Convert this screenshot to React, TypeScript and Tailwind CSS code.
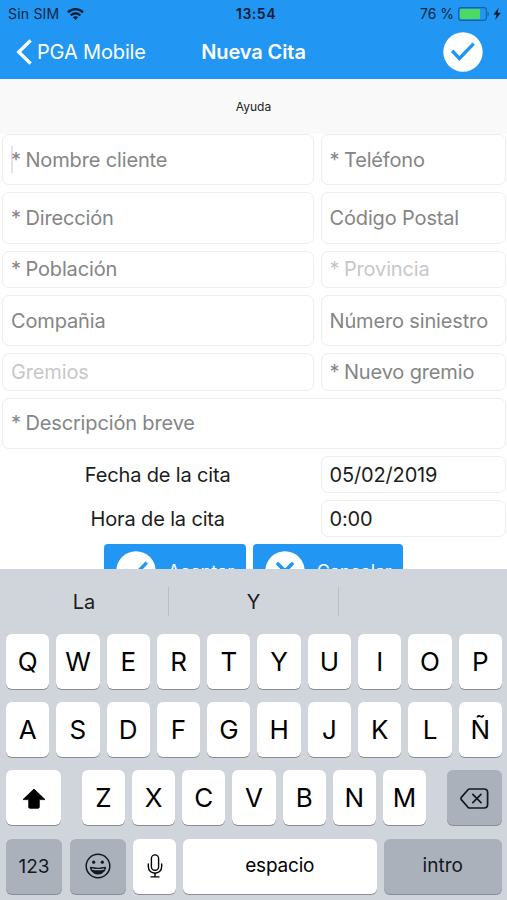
import type { ReactNode } from "react";
import clsx from "clsx";

type FieldProps = {
  children: ReactNode;
  className?: string;
  tone?: "placeholder" | "disabled" | "value";
  required?: boolean;
  focused?: boolean;
};

const tones = {
  placeholder: "text-[#858585]",
  disabled: "text-[#c7c7c9]",
  value: "text-[#1c1c1c]",
};

function Field({ children, className, tone = "placeholder", required, focused }: FieldProps) {
  return (
    <div
      className={clsx(
        "relative flex items-center whitespace-pre rounded-[7px] border border-[#ededed] bg-white pl-2",
        tones[tone],
        className,
      )}
    >
      {focused && <span className="absolute left-2 top-[11px] h-[27px] w-[2px] bg-[#e2e2fb]" />}
      <span className="relative">
        {required && <span className="tracking-[-0.6px]">* </span>}
        {children}
      </span>
    </div>
  );
}

function CheckBadge({ className }: { className?: string }) {
  return (
    <svg viewBox="0 0 40 40" className={className}>
      <circle cx="20" cy="20" r="19.7" fill="#fff" />
      <path d="M10.3 20 L16.4 26.5 L29.5 12.8" fill="none" stroke="#2196f3" strokeWidth="3.4" strokeLinecap="square" />
    </svg>
  );
}

function CrossBadge({ className }: { className?: string }) {
  return (
    <svg viewBox="0 0 40 40" className={className}>
      <circle cx="20" cy="20" r="19.7" fill="#fff" />
      <path d="M13 13 L27 27 M27 13 L13 27" fill="none" stroke="#2196f3" strokeWidth="3.6" strokeLinecap="round" />
    </svg>
  );
}

function StatusBar() {
  return (
    <div className="grid h-[27px] grid-cols-3 items-center px-2 text-[14px] text-[#0c2740]">
      <div className="flex items-center gap-2">
        <span className="tracking-[0.2px]">Sin SIM</span>
        <svg viewBox="0 0 17 12" className="h-3 w-[17px]" fill="none" stroke="#071c30" strokeWidth="2.3">
          <path d="M0.9 4.4 C5.2 0.1 11.8 0.1 16.1 4.4" />
          <path d="M3.7 7.3 C6.4 4.7 10.6 4.7 13.3 7.3" />
          <path d="M8.5 12 L5.9 9.2 C7.4 7.8 9.6 7.8 11.1 9.2 Z" fill="#071c30" stroke="none" />
        </svg>
      </div>
      <span className="pl-[5px] text-center font-semibold tracking-[0.5px] text-[#071c30]">13:54</span>
      <div className="-mr-[2px] flex items-center justify-end">
        <span className="mr-1 whitespace-nowrap">76 %</span>
        <svg viewBox="0 0 32 14" className="h-[14px] w-8">
          <rect x="0.6" y="0.6" width="27.8" height="12.8" rx="2.8" fill="none" stroke="#17639f" strokeWidth="1.1" />
          <rect x="2" y="2" width="20" height="10" rx="1" fill="#4cd964" />
          <path d="M29.6 4.7 C31.4 5.4 31.4 8.6 29.6 9.3 Z" fill="#17639f" />
        </svg>
        <svg viewBox="0 0 8 12" className="ml-[3px] h-3 w-2" fill="#071c30">
          <path d="M5.6 0 L0.3 6.8 H3.5 L2.2 12 L7.8 4.8 H4.6 Z" />
        </svg>
      </div>
    </div>
  );
}

function NavBar() {
  return (
    <div className="grid h-[50px] grid-cols-3 items-center text-white">
      <div className="flex items-center pl-4">
        <svg viewBox="0 0 16 26" className="h-[26px] w-4" fill="none" stroke="#fff" strokeWidth="3.4">
          <path d="M14.6 1.4 L2.8 13 L14.6 24.6" />
        </svg>
        <span className="ml-[5px] whitespace-nowrap text-[20px] tracking-[-0.15px]">PGA Mobile</span>
      </div>
      <h1 className="text-center text-[20px] font-semibold tracking-[-0.1px]">Nueva Cita</h1>
      <div className="flex justify-end pr-6">
        <CheckBadge className="h-10 w-10" />
      </div>
    </div>
  );
}

function AppointmentForm() {
  return (
    <div className="h-[435px] overflow-hidden">
      <div className="grid grid-cols-[311.5px_185px] grid-rows-[51.4px_51.4px_37.2px_51.4px_37.2px_51.4px_37.2px_37.2px_54px] gap-[7px] pl-[2px] text-[20px] tracking-[-0.15px]">
        <Field required focused>Nombre cliente</Field>
        <Field required>Teléfono</Field>
        <Field required>Dirección</Field>
        <Field>Código Postal</Field>
        <Field required>Población</Field>
        <Field required tone="disabled">Provincia</Field>
        <Field>Compañia</Field>
        <Field>Número siniestro</Field>
        <Field tone="disabled">Gremios</Field>
        <Field required>Nuevo gremio</Field>
        <Field required className="col-span-2">Descripción breve</Field>
        <div className="flex items-center justify-center text-[#1c1c1c]">Fecha de la cita</div>
        <Field tone="value">05/02/2019</Field>
        <div className="flex items-center justify-center text-[#1c1c1c]">Hora de la cita</div>
        <Field tone="value">0:00</Field>
        <div className="col-span-2 flex justify-center gap-[7px] pr-px text-[18px] text-white">
          <button className="flex w-[142px] items-center rounded-[4px] bg-[#2196f3] pl-3">
            <CheckBadge className="h-10 w-10" />
            <span className="ml-3">Aceptar</span>
          </button>
          <button className="flex w-[150px] items-center rounded-[4px] bg-[#2196f3] pl-3">
            <CrossBadge className="h-10 w-10" />
            <span className="ml-3">Cancelar</span>
          </button>
        </div>
      </div>
    </div>
  );
}

function Key({ children, className, dark }: { children: ReactNode; className?: string; dark?: boolean }) {
  return (
    <div
      className={clsx(
        "flex h-[55px] items-center justify-center rounded-[6px] shadow-[0_1px_0_#898c91]",
        dark ? "bg-[#abb1bb] text-[#111820]" : "bg-white text-black",
        className,
      )}
    >
      {children}
    </div>
  );
}

function LetterKeys({ letters }: { letters: string }) {
  return letters.split("").map((letter) => (
    <Key key={letter} className="w-[43.3px] text-[26px]">
      {letter}
    </Key>
  ));
}

function Keyboard() {
  return (
    <div className="h-[331px] bg-[#d0d4db]">
      <div className="grid h-[64.5px] grid-cols-[168px_171px_168px] items-center text-center text-[20px] text-[#1c1c1c]">
        <span className="pt-px">La</span>
        <span className="flex h-[29px] items-center justify-center border-x border-[#b9bfc7] pt-px">Y</span>
        <span />
      </div>
      <div className="flex flex-col gap-[13.4px] pl-[6px] pr-[5px]">
        <div className="flex justify-between">
          <LetterKeys letters="QWERTYUIOP" />
        </div>
        <div className="flex justify-between">
          <LetterKeys letters="ASDFGHJKLÑ" />
        </div>
        <div className="flex justify-between">
          <Key className="w-[55px] pt-[2px]">
            <svg viewBox="0 0 24 21" className="h-[21px] w-6">
              <path d="M12 1 L23 11.6 H17.3 V19 Q17.3 20.3 16 20.3 H8 Q6.7 20.3 6.7 19 V11.6 H1 Z" stroke="#000" strokeWidth="0.8" strokeLinejoin="round" />
            </svg>
          </Key>
          <div className="flex gap-[6.9px]">
            <LetterKeys letters="ZXCVBNM" />
          </div>
          <Key dark className="w-[55px] pt-[2px]">
            <svg viewBox="0 0 29 21" className="h-[21px] w-[29px]" fill="none" stroke="#111820" strokeWidth="1.7" strokeLinejoin="round">
              <path d="M9.6 1 H24 Q27.6 1 27.6 4.4 V16.6 Q27.6 20 24 20 H9.6 Q8.7 20 8 19.3 L1.3 11.6 Q0.6 10.5 1.3 9.4 L8 1.7 Q8.7 1 9.6 1 Z" />
              <path d="M12.8 6.4 L21 14.6 M21 6.4 L12.8 14.6" strokeLinecap="round" />
            </svg>
          </Key>
        </div>
        <div className="flex">
          <Key dark className="w-14 pt-[2px] text-[19px]">123</Key>
          <Key dark className="ml-2 w-14">
            <svg viewBox="0 0 26 26" className="h-[26px] w-[26px]" fill="none" stroke="#111820" strokeWidth="1.5">
              <circle cx="13" cy="13" r="11.8" />
              <circle cx="8.7" cy="9.2" r="1.6" fill="#111820" stroke="none" />
              <circle cx="17.3" cy="9.2" r="1.6" fill="#111820" stroke="none" />
              <path d="M5.3 14.2 Q13 16.4 20.7 14.2 C20 18.8 17 21 13 21 S6 18.8 5.3 14.2 Z" fill="#111820" strokeWidth="1" strokeLinejoin="round" />
              <path d="M6.8 15.8 Q13 17.6 19.2 15.8" stroke="#abb1bb" strokeWidth="1.3" />
            </svg>
          </Key>
          <Key className="ml-[7px] w-[43px]">
            <svg viewBox="0 0 16 24" className="h-6 w-4" fill="none" stroke="#000" strokeWidth="1.4" strokeLinecap="round">
              <rect x="4.4" y="0.9" width="7.2" height="15.4" rx="3.6" />
              <path d="M1.3 10 V12.6 C1.3 21.4 14.7 21.4 14.7 12.6 V10" />
              <path d="M8 19.3 V22.8 M4 22.9 H12" />
            </svg>
          </Key>
          <Key className="ml-[7px] w-[193.5px] text-[19px] tracking-[-0.2px]">espacio</Key>
          <Key dark className="ml-[7px] w-[118.5px] text-[19px] tracking-[0px]">intro</Key>
        </div>
      </div>
    </div>
  );
}

export default function App() {
  return (
    <div className="flex h-[900px] w-[507px] flex-col overflow-hidden bg-white font-['Inter',sans-serif]">
      <header className="h-[79px] bg-[#2196f3]">
        <StatusBar />
        <NavBar />
      </header>
      <div className="flex h-[55px] items-center justify-center bg-[#f9f9f9] text-[12px] text-[#222]">
        Ayuda
      </div>
      <AppointmentForm />
      <Keyboard />
    </div>
  );
}
